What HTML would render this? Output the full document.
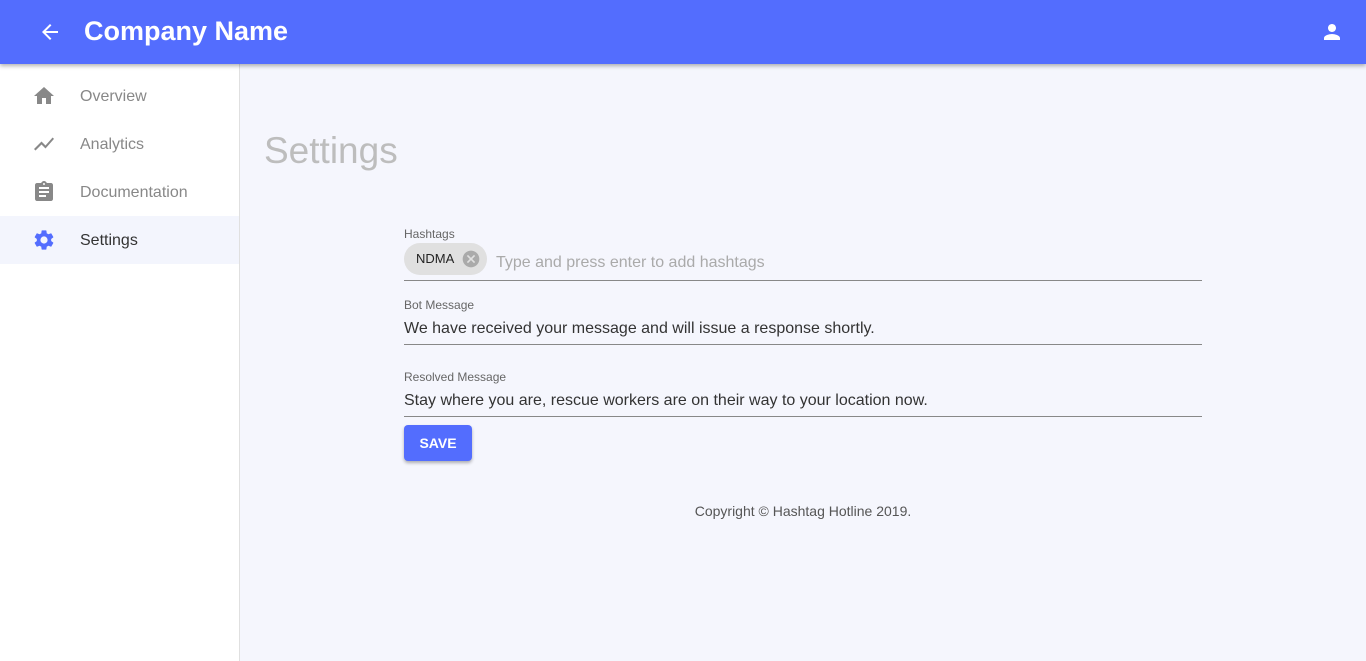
<!DOCTYPE html>
<html><head><meta charset="utf-8"><style>
*{box-sizing:border-box;margin:0;padding:0}
body{width:1366px;height:661px;overflow:hidden;background:#f5f6fd;font-family:"Liberation Sans",sans-serif;position:relative}
.top{position:absolute;left:0;top:0;width:1366px;height:64px;background:#536dfe;box-shadow:0 2px 4px rgba(0,0,0,.3);z-index:2;color:#fff}
.top .t{position:absolute;left:84px;top:16px;font-size:27px;font-weight:bold;letter-spacing:0}
.side{position:absolute;left:0;top:64px;width:240px;height:597px;background:#fff;border-right:1px solid #e0e0e0}
.item{position:absolute;left:0;width:239px;height:48px;font-size:16px;color:#888}
.item span{position:absolute;left:80px;top:16px}
.item svg{position:absolute;left:32px;top:12px}
.sel{background:#f3f5fd;color:#333}
h1{position:absolute;left:264px;top:130px;font-size:37px;font-weight:normal;color:#bdbdbd}
.lab{position:absolute;left:404px;font-size:12px;color:#666}
.val{position:absolute;left:404px;font-size:16px;color:#333}
.line{position:absolute;left:404px;width:798px;height:1px;background:#888}
.chip{position:absolute;left:404px;top:243px;width:83px;height:32px;border-radius:16px;background:#e0e0e0;font-size:13px;color:#222}
.btn{position:absolute;left:404px;top:425px;width:68px;height:36px;background:#536dfe;border-radius:4px;color:#fff;font-size:14px;font-weight:bold;text-align:center;line-height:36px;box-shadow:0 2px 3px rgba(0,0,0,.3)}
</style></head><body>
<div class="top">
<svg style="position:absolute;left:38px;top:20px" width="24" height="24" viewBox="0 0 24 24"><path fill="#fff" d="M20 11H7.83l5.59-5.59L12 4l-8 8 8 8 1.41-1.41L7.83 13H20v-2z"/></svg>
<div class="t">Company Name</div>
<svg style="position:absolute;left:1320px;top:20px" width="24" height="24" viewBox="0 0 24 24"><path fill="#fff" d="M12 12c2.21 0 4-1.790 4-4s-1.79-4-4-4-4 1.79-4 4 1.79 4 4 4zm0 2c-2.67 0-8 1.34-8 4v2h16v-2c0-2.66-5.330-4-8-4z"/></svg>
</div>
<div class="side">
<div class="item" style="top:8px"><svg width="24" height="24" viewBox="0 0 24 24"><path fill="#888" d="M10 20v-6h4v6h5v-8h3L12 3 2 12h3v8z"/></svg><span>Overview</span></div>
<div class="item" style="top:56px"><svg width="24" height="24" viewBox="0 0 24 24"><path fill="#888" d="M3.5 18.49l6-6.01 4 4L22 6.92l-1.41-1.41-7.09 7.970-4-4L2 16.99z"/></svg><span>Analytics</span></div>
<div class="item" style="top:104px"><svg width="24" height="24" viewBox="0 0 24 24"><path fill="#888" d="M19 3h-4.18C14.4 1.84 13.3 1 12 1s-2.4.84-2.82 2H5c-1.1 0-2 .9-2 2v14c0 1.1.9 2 2 2h14c1.1 0 2-.9 2-2V5c0-1.1-.9-2-2-2zm-7 0c.55 0 1 .45 1 1s-.45 1-1 1-1-.45-1-1 .45-1 1-1zm2 14H7v-2h7v2zm3-4H7v-2h10v2zm0-4H7V7h10v2z"/></svg><span>Documentation</span></div>
<div class="item sel" style="top:152px"><svg width="24" height="24" viewBox="0 0 24 24"><path fill="#536dfe" d="M19.14 12.94c.04-.3.06-.61.06-.94s-.02-.64-.07-.94l2.03-1.58a.49.49 0 00.12-.61l-1.92-3.32a.49.49 0 00-.59-.22l-2.39.96c-.5-.38-1.03-.7-1.62-.94l-.36-2.54a.48.48 0 00-.48-.41h-3.84c-.24 0-.43.17-.47.41l-.36 2.54c-.59.24-1.13.57-1.62.94l-2.39-.96a.48.48 0 00-.59.22L2.74 8.87c-.12.21-.08.47.12.61l2.03 1.58c-.05.3-.09.63-.09.94s.02.64.07.94l-2.03 1.58a.49.49 0 00-.12.61l1.92 3.32c.12.22.37.29.59.22l2.39-.96c.5.38 1.03.7 1.62.94l.36 2.54c.05.24.24.41.48.41h3.84c.24 0 .44-.17.47-.41l.36-2.54c.59-.24 1.13-.56 1.62-.94l2.39.96c.22.08.47 0 .59-.22l1.92-3.32c.12-.22.07-.47-.12-.61l-2.01-1.58zM12 15.6A3.6 3.6 0 1112 8.4a3.6 3.6 0 010 7.2z"/></svg><span>Settings</span></div>
</div>
<h1>Settings</h1>
<div class="lab" style="top:227px">Hashtags</div>
<div class="chip"><span style="position:absolute;left:12px;top:8px">NDMA</span>
<svg style="position:absolute;left:57px;top:6px" width="20" height="20" viewBox="0 0 24 24"><path fill="#aaa" d="M12 2C6.47 2 2 6.47 2 12s4.47 10 10 10 10-4.47 10-10S17.53 2 12 2zm5 13.59L15.59 17 12 13.41 8.41 17 7 15.59 10.59 12 7 8.41 8.41 7 12 10.59 15.59 7 17 8.41 13.41 12 17 15.59z"/></svg></div>
<div class="val" style="top:254px;left:496px;color:#aaa">Type and press enter to add hashtags</div>
<div class="line" style="top:280px"></div>
<div class="lab" style="top:298px">Bot Message</div>
<div class="val" style="top:320px">We have received your message and will issue a response shortly.</div>
<div class="line" style="top:344px"></div>
<div class="lab" style="top:370px">Resolved Message</div>
<div class="val" style="top:392px">Stay where you are, rescue workers are on their way to your location now.</div>
<div class="line" style="top:416px"></div>
<div class="btn">SAVE</div>
<div style="position:absolute;left:0;width:1366px;padding-left:240px;top:503px;text-align:center;font-size:14px;color:#555">Copyright © Hashtag Hotline 2019.</div>
</body></html>
